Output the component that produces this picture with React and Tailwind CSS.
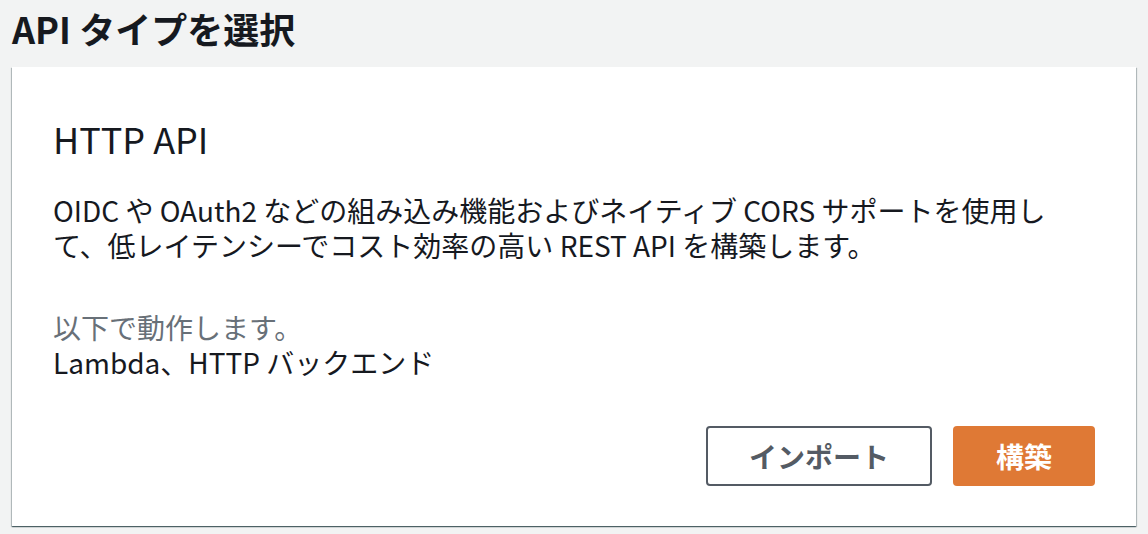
export default function App() {
  const font = { fontFamily: '"Noto Sans CJK JP", "Noto Sans", sans-serif' };
  return (
    <div className="w-[1148px] h-[534px] bg-[#f2f3f3] overflow-hidden" style={font}>
      <div className="px-[12px] pt-[6px]">
        <h1 className="text-[36px] leading-[44px] font-bold text-[#16191f] whitespace-nowrap">API タイプを選択</h1>
        <div className="mt-[17px] w-[1124px] h-[459px] bg-white shadow-[0_1px_1px_0_rgba(0,28,36,0.5),1px_1px_1px_0_rgba(0,28,36,0.2),-1px_1px_1px_0_rgba(0,28,36,0.2)] px-[41px] pt-[49px] flex flex-col">
          <h2 className="text-[36px] leading-[44px] text-[#16191f] whitespace-nowrap">HTTP API</h2>
          <p className="mt-[33px] text-[28px] leading-[35px] text-[#16191f] whitespace-nowrap">
            OIDC や OAuth2 などの組み込み機能およびネイティブ CORS サポートを使用し<br />
            て、低レイテンシーでコスト効率の高い REST API を構築します。
          </p>
          <p className="mt-[47px] text-[28px] leading-[35px] text-[#687078] whitespace-nowrap">以下で動作します。</p>
          <p className="text-[28px] leading-[35px] text-[#16191f] whitespace-nowrap">Lambda、HTTP バックエンド</p>
          <div className="mt-[46px] flex justify-end gap-[21px]">
            <button className="w-[226px] h-[60px] border-2 border-[#545b64] rounded-[4px] text-[28px] font-bold text-[#545b64] bg-white">インポート</button>
            <button className="w-[142px] h-[60px] rounded-[4px] text-[28px] font-bold text-white bg-[#df7935]">構築</button>
          </div>
        </div>
      </div>
    </div>
  );
}
